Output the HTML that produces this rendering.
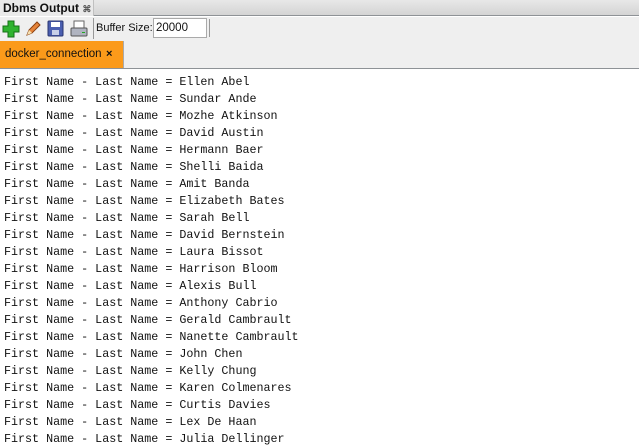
<!DOCTYPE html>
<html><head><style>
*{margin:0;padding:0;box-sizing:border-box}
body{width:639px;height:448px;overflow:hidden;background:#fff;font-family:"Liberation Sans",sans-serif;position:relative}
#title{position:absolute;left:0;top:0;width:639px;height:16px;background:linear-gradient(#e8e8e8,#d4d4d4);border-bottom:1px solid #8e9296}
#ttab{position:absolute;left:0;top:0;width:94px;height:16px;background:#eaeaea;border-right:1px solid #c0c0c0;font-size:12px;font-weight:bold;padding-left:3px;line-height:16px;color:#111}
#tb{position:absolute;left:0;top:17px;width:639px;height:51px;background:#efefef}
#tab{position:absolute;left:0;top:41px;width:124px;height:27px;background:#fb9a1a;border-right:1px solid #aaa;font-size:11.5px;line-height:26px;padding-left:5px;color:#111;white-space:nowrap}
#content{position:absolute;left:0;top:68px;width:639px;height:380px;border-top:1px solid #8e9296;background:#fff}
pre{font-family:"Liberation Mono",monospace;font-size:11.7px;line-height:17px;padding:5px 0 0 4px;color:#111}
</style></head><body>
<div id="title"><div id="ttab">Dbms Output <span style="font-size:9px;color:#555">⌘</span></div></div>
<div id="tb">
<svg style="position:absolute;left:2px;top:3px" width="18" height="18"><path d="M6 1h6v5h5v6h-5v5H6v-5H1V6h5z" fill="#2fb32f" stroke="#147014"/></svg>
<svg style="position:absolute;left:24px;top:3px" width="18" height="18"><path d="M3 15l2-5 8-8 3 3-8 8z" fill="#e6843a" stroke="#8a3f10"/><path d="M3 15l2-5 3 3z" fill="#f6e0b0"/></svg>
<svg style="position:absolute;left:47px;top:3px" width="18" height="18"><rect x="1" y="1" width="15" height="15" rx="1" fill="#4b5fb0" stroke="#2a3570"/><rect x="4" y="2" width="9" height="5" fill="#fff"/><rect x="5" y="10" width="7" height="5" fill="#c8d0e8"/></svg>
<svg style="position:absolute;left:70px;top:3px" width="18" height="18"><rect x="4" y="1" width="10" height="7" fill="#fff" stroke="#666"/><rect x="1" y="8" width="16" height="8" rx="1" fill="#b0b4c0" stroke="#555"/><rect x="12" y="12" width="3" height="1" fill="#2a2"/></svg>
<div style="position:absolute;left:93px;top:1px;width:1px;height:21px;background:#999"></div>
<div style="position:absolute;left:96px;top:5px;font-size:11px;color:#111;white-space:nowrap">Buffer Size:</div>
<div style="position:absolute;left:153px;top:1px;width:54px;height:20px;background:#fff;border:1px solid #aaa;font-size:11.5px;padding:3px 0 0 2px;color:#111">20000</div>
<div style="position:absolute;left:209px;top:2px;width:1px;height:18px;background:#999"></div>
</div>
<div id="tab">docker_connection<span style="position:absolute;left:106px;top:0;font-weight:bold;font-size:11px">×</span></div>
<div id="content"><pre>First Name - Last Name = Ellen Abel
First Name - Last Name = Sundar Ande
First Name - Last Name = Mozhe Atkinson
First Name - Last Name = David Austin
First Name - Last Name = Hermann Baer
First Name - Last Name = Shelli Baida
First Name - Last Name = Amit Banda
First Name - Last Name = Elizabeth Bates
First Name - Last Name = Sarah Bell
First Name - Last Name = David Bernstein
First Name - Last Name = Laura Bissot
First Name - Last Name = Harrison Bloom
First Name - Last Name = Alexis Bull
First Name - Last Name = Anthony Cabrio
First Name - Last Name = Gerald Cambrault
First Name - Last Name = Nanette Cambrault
First Name - Last Name = John Chen
First Name - Last Name = Kelly Chung
First Name - Last Name = Karen Colmenares
First Name - Last Name = Curtis Davies
First Name - Last Name = Lex De Haan
First Name - Last Name = Julia Dellinger</pre></div>
</body></html>
